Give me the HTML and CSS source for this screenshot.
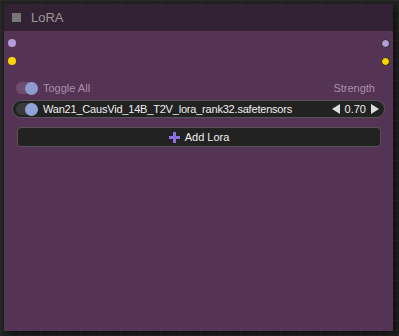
FILE: index.html
```html
<!DOCTYPE html>
<html lang="en">
<head>
  <meta charset="UTF-8">
  <title>LoRA</title>
  <link rel="stylesheet" href="styles.css">
</head>
<body>

  <div class="node">
    <div class="title">
      <span class="title-box"></span>
      <span class="title-text">LoRA</span>
    </div>

    <!-- Slots -->
    <div class="slots">
      <div class="slot-row">
        <span class="dot dot-model"></span>
        <span class="dot dot-model out"></span>
      </div>
      <div class="slot-row">
        <span class="dot dot-clip"></span>
        <span class="dot dot-clip out"></span>
      </div>
    </div>

    <div class="widgets">
      <div class="header-row">
        <div class="toggle dim"><span class="knob"></span></div>
        <span class="label">Toggle All</span>
        <span class="label strength">Strength</span>
      </div>

      <div class="lora-row">
        <div class="toggle"><span class="knob"></span></div>
        <span class="lora-name">Wan21_CausVid_14B_T2V_lora_rank32.safetensors</span>
        <div class="number">
          <svg width="8" height="10" viewBox="0 0 8 10"><path d="M8 0 L0 5 L8 10 Z" fill="#ddd"/></svg>
          <span class="value">0.70</span>
          <svg width="8" height="10" viewBox="0 0 8 10"><path d="M0 0 L8 5 L0 10 Z" fill="#ddd"/></svg>
        </div>
      </div>

      <button class="add-btn">
        <svg width="11" height="11" viewBox="0 0 11 11"><path d="M4 0h3v4h4v3H7v4H4V7H0V4h4z" fill="#8a6fe0"/></svg>
        Add Lora
      </button>
    </div>
  </div>

</body>
</html>
```

FILE: styles.css
```css
body {
  margin: 0;
  width: 399px;
  height: 336px;
  overflow: hidden;
  background-color: #222;
  background-image:
    linear-gradient(#2a2a2a 1px, transparent 1px),
    linear-gradient(90deg, #2a2a2a 1px, transparent 1px);
  background-size: 10px 10px;
  font-family: "Liberation Sans", Arial, sans-serif;
  padding: 4px;
  box-sizing: border-box;
}
.node {
  width: 389px;
  height: 327px;
  background: #553355;
  border-radius: 2px 2px 0 0;
  box-shadow: 3px 3px 6px rgba(0,0,0,0.6);
}
.title {
  height: 27px;
  background: #332233;
  display: flex;
  align-items: center;
  padding-left: 8px;
}
.title-box {
  width: 9px;
  height: 9px;
  background: #777;
}
.title-text {
  margin-left: 10px;
  color: #999;
  font-size: 13px;
}
.slots {
  padding-top: 3px;
}
.slot-row {
  height: 18px;
  display: flex;
  align-items: center;
  justify-content: space-between;
  padding: 0 3px 0 4px;
}
.dot {
  width: 8px;
  height: 8px;
  border-radius: 50%;
  box-sizing: border-box;
}
.dot.out {
  border: 1px solid #222;
  width: 9px;
  height: 9px;
}
.dot-model {
  background: #b39ddb;
}
.dot-clip {
  background: #ffd500;
}
.widgets {
  padding: 10px 8px 0 8px;
}
.header-row {
  height: 16px;
  display: flex;
  align-items: center;
  padding: 0 10px 0 4px;
}
.label {
  color: #a98ea9;
  font-size: 11px;
  margin-left: 5px;
}
.strength {
  margin-left: auto;
}
.toggle {
  width: 22px;
  height: 12px;
  border-radius: 6px;
  background: #3a3a3a;
  display: flex;
  align-items: center;
  justify-content: flex-end;
}
.toggle.dim {
  background: #6f4d6f;
}
.knob {
  width: 13px;
  height: 13px;
  border-radius: 50%;
  background: #8fa3d8;
}
.toggle.dim .knob {
  background: #8e9bd0;
}
.lora-row {
  margin-top: 4px;
  height: 16px;
  display: flex;
  align-items: center;
  background: #222;
  border: 1px solid #555;
  border-radius: 9px;
  padding: 0 5px 0 3px;
}
.lora-name {
  margin-left: 5px;
  color: #eee;
  font-size: 11px;
  letter-spacing: -0.2px;
}
.number {
  margin-left: auto;
  display: flex;
  align-items: center;
  gap: 5px;
}
.value {
  color: #eee;
  font-size: 11px;
}
.add-btn {
  display: flex;
  align-items: center;
  justify-content: center;
  gap: 5px;
  width: 364px;
  height: 20px;
  margin: 9px 0 0 5px;
  background: #222;
  border: 1px solid #555;
  border-radius: 4px;
  color: #eee;
  font-family: "Liberation Sans", Arial, sans-serif;
  font-size: 11px;
}
```
